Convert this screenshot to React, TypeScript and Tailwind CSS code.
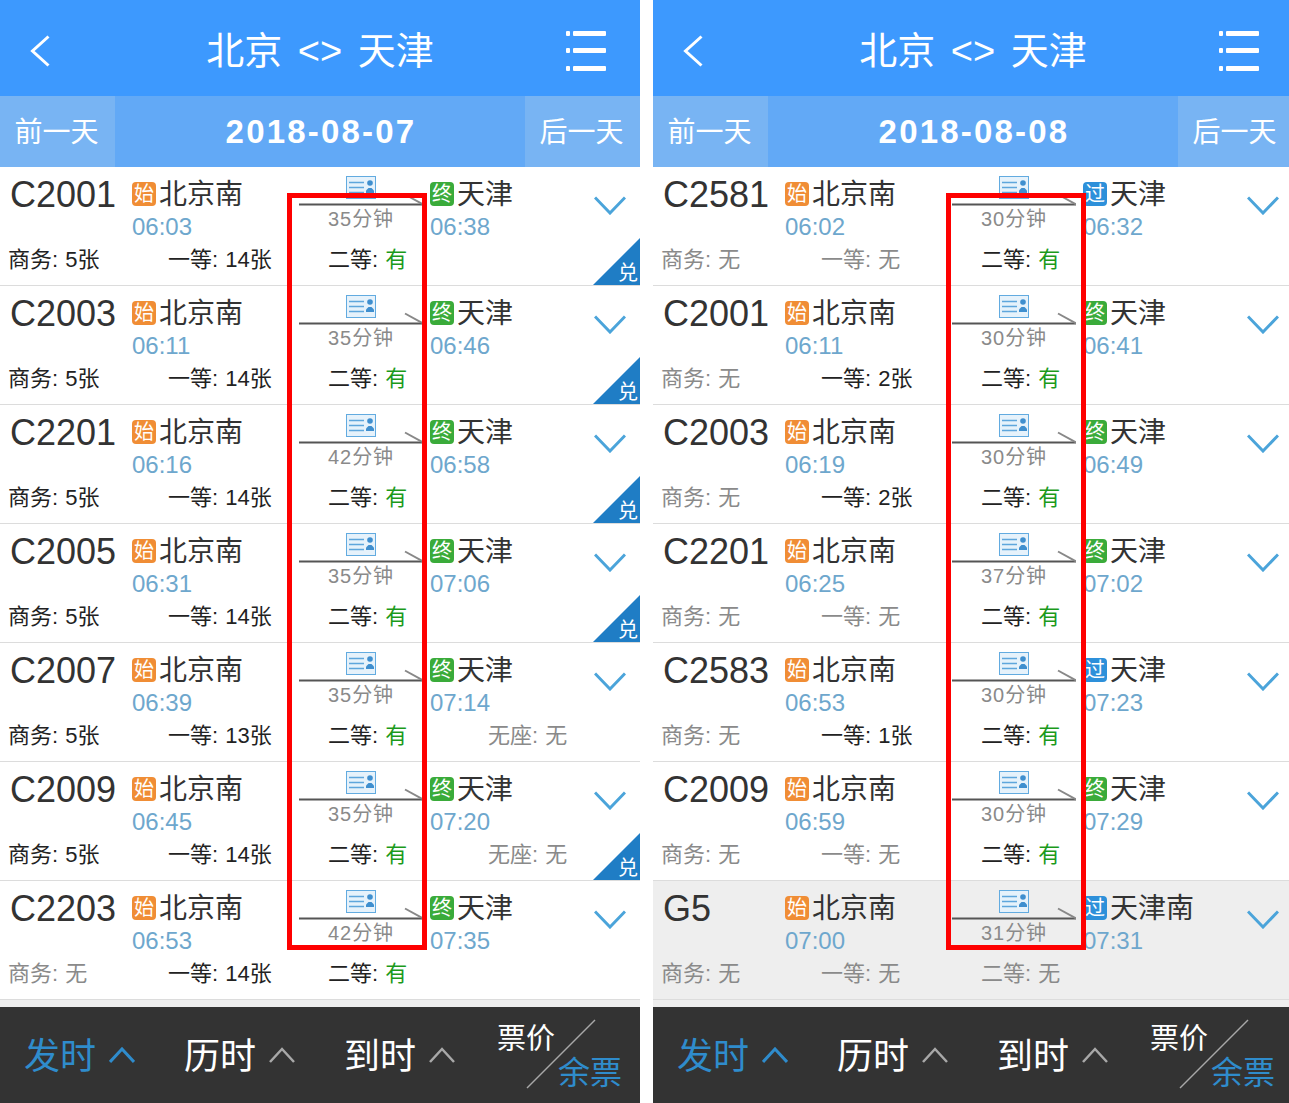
const FONT = "font-['Liberation_Sans','Noto_Sans_CJK_SC',sans-serif]"

interface Train {
  no: string
  depart: string
  arrive: string
  mins: number
  endKind: '终' | '过'
  dest?: string
  biz: string
  first: string
  second: string
  noSeat?: boolean
  exchange?: boolean
  muted?: boolean
}

const day1: Train[] = [
  { no: 'C2001', depart: '06:03', arrive: '06:38', mins: 35, endKind: '终', biz: '5张', first: '14张', second: '有', exchange: true },
  { no: 'C2003', depart: '06:11', arrive: '06:46', mins: 35, endKind: '终', biz: '5张', first: '14张', second: '有', exchange: true },
  { no: 'C2201', depart: '06:16', arrive: '06:58', mins: 42, endKind: '终', biz: '5张', first: '14张', second: '有', exchange: true },
  { no: 'C2005', depart: '06:31', arrive: '07:06', mins: 35, endKind: '终', biz: '5张', first: '14张', second: '有', exchange: true },
  { no: 'C2007', depart: '06:39', arrive: '07:14', mins: 35, endKind: '终', biz: '5张', first: '13张', second: '有', noSeat: true },
  { no: 'C2009', depart: '06:45', arrive: '07:20', mins: 35, endKind: '终', biz: '5张', first: '14张', second: '有', noSeat: true, exchange: true },
  { no: 'C2203', depart: '06:53', arrive: '07:35', mins: 42, endKind: '终', biz: '无', first: '14张', second: '有' },
]

const day2: Train[] = [
  { no: 'C2581', depart: '06:02', arrive: '06:32', mins: 30, endKind: '过', biz: '无', first: '无', second: '有' },
  { no: 'C2001', depart: '06:11', arrive: '06:41', mins: 30, endKind: '终', biz: '无', first: '2张', second: '有' },
  { no: 'C2003', depart: '06:19', arrive: '06:49', mins: 30, endKind: '终', biz: '无', first: '2张', second: '有' },
  { no: 'C2201', depart: '06:25', arrive: '07:02', mins: 37, endKind: '终', biz: '无', first: '无', second: '有' },
  { no: 'C2583', depart: '06:53', arrive: '07:23', mins: 30, endKind: '过', biz: '无', first: '1张', second: '有' },
  { no: 'C2009', depart: '06:59', arrive: '07:29', mins: 30, endKind: '终', biz: '无', first: '无', second: '有' },
  { no: 'G5', depart: '07:00', arrive: '07:31', mins: 31, endKind: '过', dest: '天津南', biz: '无', first: '无', second: '无', muted: true },
]

function Seat({ label, value }: { label: string; value: string }) {
  const none = value === '无'
  const valueColor = none ? 'text-[#8a8a8a]' : value === '有' ? 'text-[#1b9a1b]' : 'text-[#222]'
  return (
    <span className={`w-[160px] shrink-0 whitespace-nowrap text-[22px] leading-[34px] ${none ? 'text-[#8a8a8a]' : 'text-[#222]'}`}>
      {label}: <span className={`ml-[1px] ${valueColor}`}>{value}</span>
    </span>
  )
}

function Badge({ text, color }: { text: string; color: string }) {
  return (
    <span className={`mr-[3px] flex h-[24px] w-[24px] shrink-0 items-center justify-center rounded-[4px] text-[20px] leading-none text-white ${color}`}>
      {text}
    </span>
  )
}

function Track() {
  return (
    <svg width="124" height="31" viewBox="0 0 124 31" className="block">
      <rect x="47.5" y="0.5" width="29" height="22" fill="#e6f2fb" stroke="#62abe0" />
      <path d="M50 6.500h15M50 11.500h15M50 16.500h15" stroke="#5ea6dc" strokeWidth="1.500" />
      <circle cx="71" cy="7" r="2.800" fill="#3f8fcf" />
      <path d="M67 17v-2.500l2.500-2.500h3l2.500 2.500V17z" fill="#3f8fcf" />
      <path d="M0 28.500h124" stroke="#555" strokeWidth="2" />
      <path d="M106 18.500l18 10" stroke="#888" strokeWidth="2" />
    </svg>
  )
}

function TrainRow({ t }: { t: Train }) {
  return (
    <div className={`relative h-[119px] overflow-hidden border-b border-[#dcdcdc] ${t.muted ? 'bg-[#eeeeee]' : 'bg-white'}`}>
      <div className="flex h-[76px]">
        <div className="w-[132px] shrink-0 pl-[10px] pt-[11px] text-[36px] leading-[34px] text-[#333]">{t.no}</div>
        <div className="w-[167px] shrink-0 pt-[10px]">
          <div className="flex h-[34px] items-center text-[28px] text-[#333]">
            <Badge text="始" color="bg-[#f08d35]" />
            <span className="pt-[2px]">北京南</span>
          </div>
          <div className="h-[32px] text-[24px] leading-[32px] text-[#6ea7cd]">{t.depart}</div>
        </div>
        <div className="flex w-[131px] shrink-0 flex-col items-start pt-[9px]">
          <Track />
          <div className="w-[124px] text-center text-[20px] leading-[24px] tracking-[1px] text-[#8a8a8a]">{t.mins}分钟</div>
        </div>
        <div className="w-[164px] shrink-0 pt-[10px]">
          <div className="flex h-[34px] items-center whitespace-nowrap text-[28px] text-[#333]">
            <Badge text={t.endKind} color={t.endKind === '终' ? 'bg-[#3aab3a]' : 'bg-[#2d90da]'} />
            <span className="pt-[2px]">{t.dest ?? '天津'}</span>
          </div>
          <div className="h-[32px] text-[24px] leading-[32px] text-[#6ea7cd]">{t.arrive}</div>
        </div>
        <div className="pt-[29px]">
          <svg width="32" height="19" viewBox="0 0 32 19" fill="none" className="block">
            <path d="M1 1.500 16 17 31 1.500" stroke="#4ba4da" strokeWidth="3" />
          </svg>
        </div>
      </div>
      <div className="flex pl-[8px]">
        <Seat label="商务" value={t.biz} />
        <Seat label="一等" value={t.first} />
        <Seat label="二等" value={t.second} />
        {t.noSeat && <Seat label="无座" value="无" />}
      </div>
      {t.exchange && (
        <div className="absolute bottom-0 right-0 flex h-[47px] w-[47px] items-end justify-end bg-[#1f7dc5] pr-[2px] text-[20px] leading-[24px] text-white [clip-path:polygon(100%_0,100%_100%,0_100%)]">
          兑
        </div>
      )}
    </div>
  )
}

function SortItem({ label, active }: { label: string; active?: boolean }) {
  return (
    <div className="flex w-[160px] shrink-0 items-center">
      <span className={`pt-[4px] text-[36px] leading-none ${active ? 'text-[#2f8ccc]' : 'text-white'}`}>{label}</span>
      <svg width="26" height="16" viewBox="0 0 26 16" fill="none" className="ml-[13px]">
        <path d="M1 15 13 2l12 13" stroke={active ? '#2f8ccc' : '#a8a8a8'} strokeWidth={active ? 3 : 2.500} />
      </svg>
    </div>
  )
}

function Panel({ date, trains, boxLeft }: { date: string; trains: Train[]; boxLeft: string }) {
  return (
    <div className="relative h-[1103px] w-[640px] shrink-0 bg-[#eeeeee]">
      <div className="flex h-[96px] items-center bg-[#3d99fe] pt-[6px]">
        <div className="w-[110px] pl-[30px]">
          <svg width="20" height="32" viewBox="0 0 20 32" fill="none" className="block">
            <path d="M18.500 1.500 2.500 16l16 14.500" stroke="#fff" strokeWidth="3" />
          </svg>
        </div>
        <div className="flex-1 text-center text-[38px] leading-none text-white [word-spacing:5px]">北京 &lt;&gt; 天津</div>
        <div className="flex w-[110px] justify-end pr-[34px]">
          <svg width="40" height="40" viewBox="0 0 40 40" fill="#fff" className="block">
            <rect x="0" y="0" width="4" height="5" rx="1" />
            <rect x="7" y="0" width="33" height="5" rx="1" />
            <rect x="0" y="17" width="4" height="5" rx="1" />
            <rect x="7" y="17" width="33" height="5" rx="1" />
            <rect x="0" y="35" width="4" height="5" rx="1" />
            <rect x="7" y="35" width="33" height="5" rx="1" />
          </svg>
        </div>
      </div>
      <div className="flex h-[71px] items-center bg-[#62a9f6] text-white">
        <div className="flex h-full w-[115px] items-center justify-center bg-[#78b4f3] pt-[2px] pr-[2px] text-[28px]">前一天</div>
        <div className="flex-1 pl-[2px] text-center text-[33px] font-bold tracking-[2.200px]">{date}</div>
        <div className="flex h-full w-[115px] items-center justify-center bg-[#78b4f3] pt-[2px] pr-[2px] text-[28px]">后一天</div>
      </div>
      {trains.map(t => (
        <TrainRow key={t.no} t={t} />
      ))}
      <div className="mt-[7px] flex h-[96px] items-center bg-[#333333] pl-[24px]">
        <SortItem label="发时" active />
        <SortItem label="历时" />
        <SortItem label="到时" />
        <div className="relative h-[96px] w-[135px] shrink-0">
          <span className="absolute left-[-7px] top-[18px] text-[29px] leading-none text-white">票价</span>
          <span className="absolute left-[54px] top-[50px] text-[32px] leading-none text-[#2f8ccc]">余票</span>
          <svg width="70" height="70" viewBox="0 0 70 70" className="absolute left-[22px] top-[12px]">
            <path d="M1 69 69 1" stroke="#a8a8a8" strokeWidth="1.500" />
          </svg>
        </div>
      </div>
      <div className={`absolute top-[193px] h-[757px] w-[140px] border-[5px] border-[#fe0000] ${boxLeft}`} />
    </div>
  )
}

export default function App() {
  return (
    <div className={`flex h-[1103px] w-[1289px] gap-[13px] overflow-hidden bg-white ${FONT}`}>
      <Panel date="2018-08-07" trains={day1} boxLeft="left-[287px]" />
      <Panel date="2018-08-08" trains={day2} boxLeft="left-[293px]" />
    </div>
  )
}
